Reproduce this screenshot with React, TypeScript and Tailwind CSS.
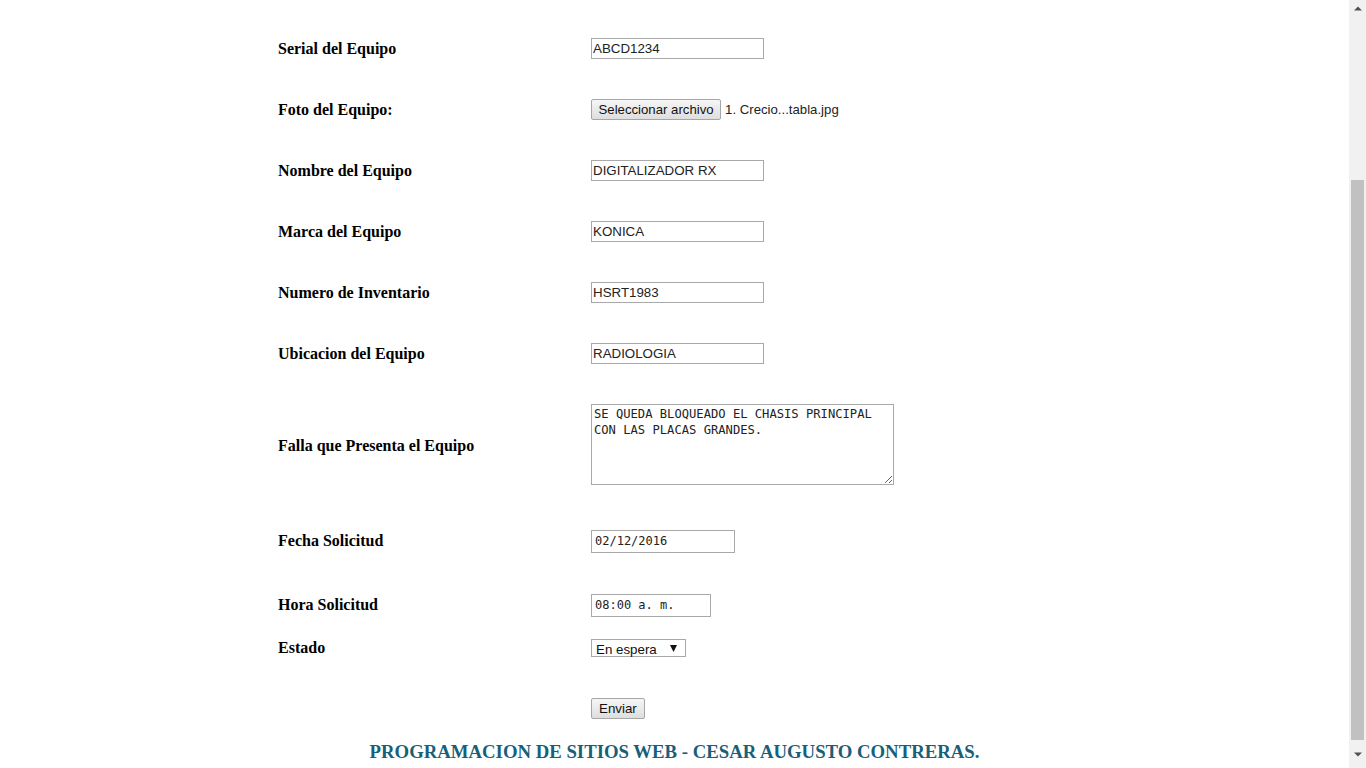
import React from 'react';

const serif = { fontFamily: '"Liberation Serif", "Times New Roman", serif' };

const Label: React.FC<{ text: string }> = ({ text }) => (
	<div className="w-[313px] text-[16px] font-bold text-black" style={serif}>
		{text}
	</div>
);

const TextBox: React.FC<{ value: string }> = ({ value }) => (
	<input
		className="w-[173px] h-[21px] border border-[#a9a9a9] px-[1px] text-[13.33px] text-[#222] font-['Liberation_Sans',Arial,sans-serif] outline-none"
		type="text"
		defaultValue={value}
	/>
);

const App: React.FC = () => {
	return (
		<div className="flex h-[768px] w-[1366px] overflow-hidden bg-white">
			<div className="flex-1 flex flex-col">
				<div className="flex flex-col pl-[278px] pt-[18px]">
					<div className="flex items-center h-[61px]">
						<Label text="Serial del Equipo" />
						<TextBox value="ABCD1234" />
					</div>
					<div className="flex items-center h-[61px]">
						<Label text="Foto del Equipo:" />
						<div className="flex items-center gap-[4px] font-['Liberation_Sans',Arial,sans-serif] text-[13.2px] text-[#222]">
							<button className="h-[21px] px-[6.5px] border border-[#a6a6a6] rounded-[2px] bg-gradient-to-b from-[#f6f6f6] to-[#dedede] text-[13.2px] text-[#111]">
								Seleccionar archivo
							</button>
							<span>1. Crecio...tabla.jpg</span>
						</div>
					</div>
					<div className="flex items-center h-[61px]">
						<Label text="Nombre del Equipo" />
						<TextBox value="DIGITALIZADOR RX" />
					</div>
					<div className="flex items-center h-[61px]">
						<Label text="Marca del Equipo" />
						<TextBox value="KONICA" />
					</div>
					<div className="flex items-center h-[61px]">
						<Label text="Numero de Inventario" />
						<TextBox value="HSRT1983" />
					</div>
					<div className="flex items-center h-[61px]">
						<Label text="Ubicacion del Equipo" />
						<TextBox value="RADIOLOGIA" />
					</div>
					<div className="flex items-center h-[124px]">
						<Label text="Falla que Presenta el Equipo" />
						<textarea
							className="w-[303px] h-[81px] mb-[3px] border border-[#a9a9a9] px-[2px] py-[1px] text-[12.15px] leading-[16px] text-[#222] font-['DejaVu_Sans_Mono',monospace] outline-none"
							defaultValue={"SE QUEDA BLOQUEADO EL CHASIS PRINCIPAL\nCON LAS PLACAS GRANDES."}
						/>
					</div>
					<div className="flex items-center h-[66px]">
						<Label text="Fecha Solicitud" />
						<input
							className="w-[144px] h-[23px] border border-[#a9a9a9] px-[3px] text-[12px] text-[#222] font-['DejaVu_Sans_Mono',monospace] outline-none"
							type="text"
							defaultValue="02/12/2016"
						/>
					</div>
					<div className="flex items-center h-[62px]">
						<Label text="Hora Solicitud" />
						<input
							className="w-[120px] h-[23px] border border-[#a9a9a9] px-[3px] text-[12px] text-[#222] font-['DejaVu_Sans_Mono',monospace] outline-none"
							type="text"
							defaultValue="08:00 a. m."
						/>
					</div>
					<div className="flex items-center h-[24px]">
						<Label text="Estado" />
						<div className="relative w-[95px] h-[18px] border border-[#a9a9a9] bg-white font-['Liberation_Sans',Arial,sans-serif] text-[13.33px] text-[#111]">
							<select className="w-full h-full appearance-none bg-transparent pl-[4px] text-[13.33px] leading-[16px] outline-none">
								<option>En espera</option>
								<option>En proceso</option>
								<option>Terminado</option>
							</select>
							<svg className="absolute right-[8px] top-[5px] pointer-events-none" width="7" height="7" viewBox="0 0 7 7">
								<path d="M0 0 L7 0 L3.5 7 Z" fill="#111" />
							</svg>
						</div>
					</div>
					<div className="flex items-start h-[76px] pt-[38px]">
						<div className="w-[313px]" />
						<button className="h-[21px] px-[7px] border border-[#a6a6a6] rounded-[2px] bg-gradient-to-b from-[#f6f6f6] to-[#dedede] font-['Liberation_Sans',Arial,sans-serif] text-[13.33px] text-[#111]">
							Enviar
						</button>
					</div>
				</div>
				<div className="h-[32px] flex items-center justify-center text-[18.75px] font-bold text-[#18607a]" style={serif}>
					PROGRAMACION DE SITIOS WEB - CESAR AUGUSTO CONTRERAS.
				</div>
			</div>
			<div className="w-[17px] h-full flex flex-col bg-[#f1f1f1]">
				<div className="h-[17px] flex items-center justify-center">
					<svg width="8" height="5" viewBox="0 0 8 5"><path d="M0 4.5 L4 0.5 L8 4.5 Z" fill="#505050" /></svg>
				</div>
				<div className="h-[163px]" />
				<div className="flex-1 mx-[2px] bg-[#c1c1c1]" />
				<div className="h-[28px] flex items-center justify-center">
					<svg width="8" height="5" viewBox="0 0 8 5"><path d="M0 0.5 L4 4.5 L8 0.5 Z" fill="#505050" /></svg>
				</div>
			</div>
		</div>
	);
};

export default App;
